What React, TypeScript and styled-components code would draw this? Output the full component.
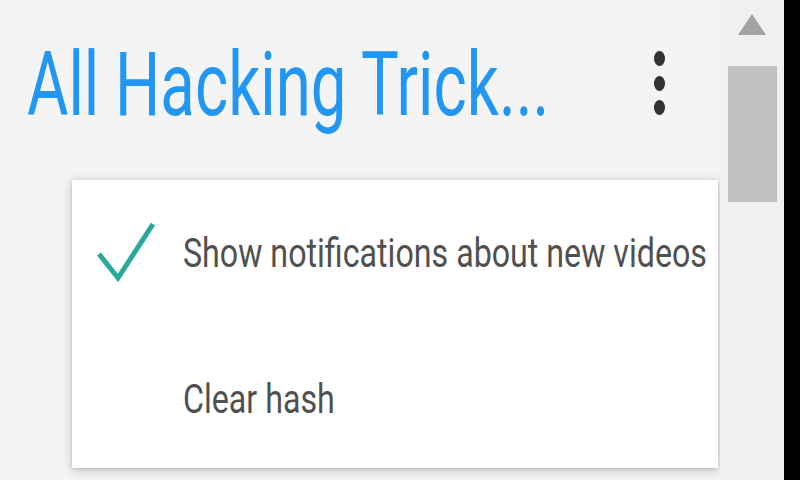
import React from "react";
import styled, { createGlobalStyle } from "styled-components";

const Global = createGlobalStyle`
  html, body { margin: 0; padding: 0; background: #f4f4f4; }
  body { font-family: Roboto, "Noto Sans", sans-serif; }
`;

const Screen = styled.div`
  width: 800px;
  height: 480px;
  display: flex;
  overflow: hidden;
  background: #f4f4f4;
`;

const Main = styled.div`
  width: 720px;
  display: flex;
  flex-direction: column;
`;

const Header = styled.header`
  height: 180px;
  display: flex;
  align-items: flex-start;
  padding-left: 27px;
  box-sizing: border-box;
`;

const Stretched = styled.span<{ $scale: number }>`
  display: inline-block;
  transform: scaleY(${(p) => p.$scale});
  transform-origin: center center;
  white-space: nowrap;
`;

const Title = styled.h1`
  margin: 53px 0 0;
  font-family: Roboto, sans-serif;
  font-weight: 400;
  font-size: 63.5px;
  line-height: 63px;
  color: #2196f3;
  letter-spacing: 0;
`;

const Kebab = styled.div`
  margin: 51px 54px 0 auto;
  width: 14px;
  height: 64px;
  display: flex;
  flex-direction: column;
  justify-content: space-between;
  align-items: center;
`;

const Dot = styled.span`
  width: 11px;
  height: 15px;
  border-radius: 50%;
  background: #333;
`;

const Card = styled.div`
  margin-left: 72px;
  width: 646px;
  height: 288px;
  background: #fff;
  box-shadow: 0 2px 10px rgba(0, 0, 0, 0.22), 0 1px 3px rgba(0, 0, 0, 0.12);
  overflow: hidden;
  display: flex;
  flex-direction: column;
`;

const Item = styled.div`
  height: 146px;
  flex-shrink: 0;
  display: flex;
  align-items: center;
  padding-left: 25px;
`;

const IconSlot = styled.div`
  width: 58px;
  height: 62px;
  flex-shrink: 0;
  margin-right: 28px;
  display: flex;
  align-items: center;
`;

const Label = styled.div`
  font-family: Roboto, sans-serif;
  font-size: 32.2px;
  line-height: 33px;
  color: #505050;
`;

const Scrollbar = styled.div`
  width: 64px;
  background: #f0f0f0;
  display: flex;
  flex-direction: column;
  align-items: center;
`;

const Arrow = styled.div`
  margin-top: 14px;
  width: 0;
  height: 0;
  border-left: 14px solid transparent;
  border-right: 14px solid transparent;
  border-bottom: 21px solid #a3a3a3;
`;

const Thumb = styled.div`
  margin-top: 31px;
  margin-left: 1px;
  width: 49px;
  height: 136px;
  background: #c1c1c1;
`;

const Edge = styled.div`
  width: 16px;
  background: #000;
`;

const Check = () => (
  <svg width="58" height="62" viewBox="0 0 58 62" fill="none">
    <polyline
      points="2,32 21,56 56,2"
      stroke="#2aa99b"
      strokeWidth="5"
      strokeLinejoin="miter"
    />
  </svg>
);

export default function App() {
  return (
    <>
      <Global />
      <Screen>
        <Main>
          <Header>
            <Title>
              <Stretched $scale={1.4}>All Hacking Trick...</Stretched>
            </Title>
            <Kebab>
              <Dot />
              <Dot />
              <Dot />
            </Kebab>
          </Header>
          <Card>
            <Item>
              <IconSlot>
                <Check />
              </IconSlot>
              <Label>
                <Stretched $scale={1.27}>Show notifications about new videos</Stretched>
              </Label>
            </Item>
            <Item>
              <IconSlot />
              <Label>
                <Stretched $scale={1.27}>Clear hash</Stretched>
              </Label>
            </Item>
          </Card>
        </Main>
        <Scrollbar>
          <Arrow />
          <Thumb />
        </Scrollbar>
        <Edge />
      </Screen>
    </>
  );
}
